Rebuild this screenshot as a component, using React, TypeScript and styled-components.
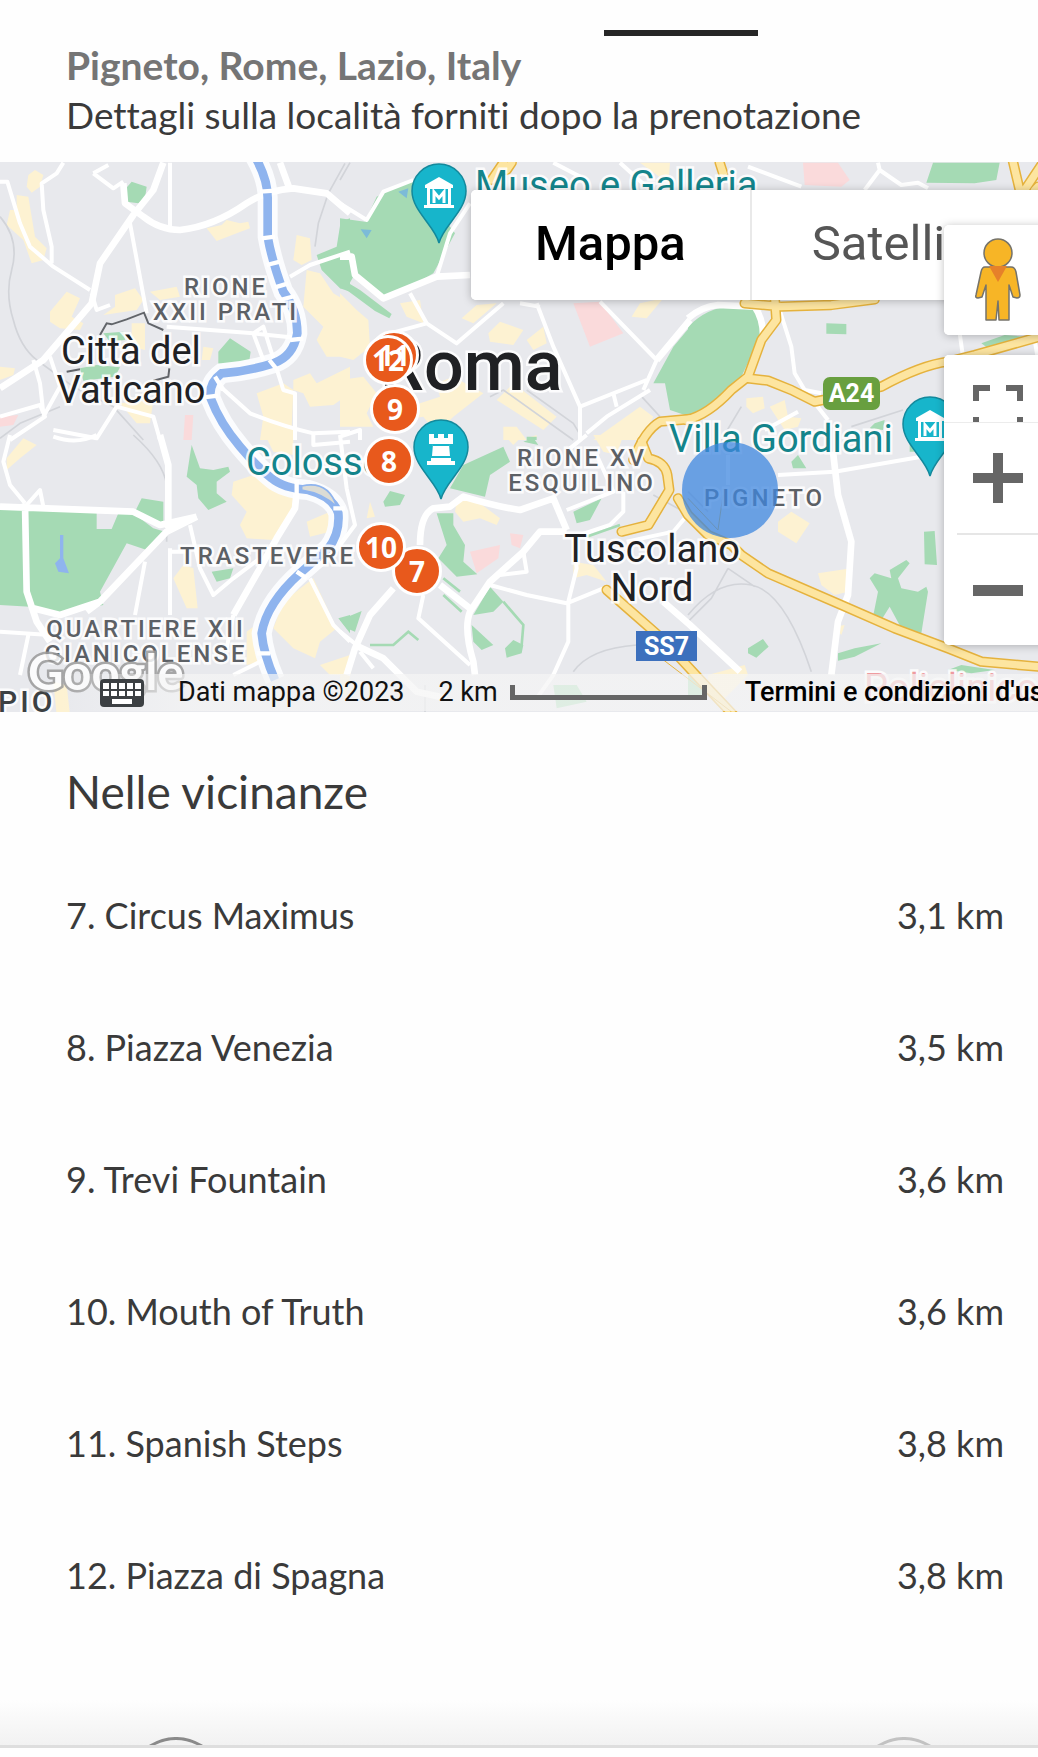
import React from "react";
import styled, { createGlobalStyle, css } from "styled-components";

const GlobalStyle = createGlobalStyle`
  * { box-sizing: border-box; }
  body { margin: 0; background: #fff; overflow-x: hidden; }
  button { font: inherit; border: 0; margin: 0; padding: 0; background: #fff; cursor: pointer; }
  h1, h2, p, ul { margin: 0; padding: 0; font-weight: inherit; }
`;

const Page = styled.main`
  font-family: Lato, "Open Sans", sans-serif;
  font-variant-ligatures: none;
  color: #3a3a3a;
  background: #fefefe;
  overflow: hidden;
`;

const TabStrip = styled.div`
  display: flex;
  justify-content: flex-end;
  padding: 30px 280px 0 0;
`;

const TabMarker = styled.div`
  width: 154px;
  height: 6px;
  background: #262626;
`;

const Heading = styled.header`
  padding: 4px 66px 22px;
  font-size: 37px;
  line-height: 50px;
`;

const Place = styled.h1`
  font-size: 39px;
  font-weight: 700;
  color: #757575;
`;

const MapFrame = styled.section`
  position: relative;
  height: 550px;
  overflow: hidden;
  background: #e8e9ed;
  font-family: Roboto, sans-serif;
`;

const MapDrawing = styled.svg`
  position: absolute;
  left: 0;
  top: 0;
  width: 1038px;
  height: 550px;
`;

type Kind = "area" | "town" | "city" | "sight" | "edge" | "clinic";

const kinds = {
  area: css`font-size: 24px; line-height: 25px; font-weight: 500; letter-spacing: 3px; color: #5c6065;`,
  town: css`font-size: 38px; line-height: 39px; color: #202124;`,
  city: css`font-size: 70px; line-height: 70px; font-weight: 500; color: #202124;`,
  sight: css`font-size: 38px; line-height: 39px; color: #13848b;`,
  edge: css`font-size: 30px; line-height: 30px; font-weight: 500; letter-spacing: 3px; color: #3c4043;`,
  clinic: css`font-size: 38px; line-height: 39px; color: #ee9ba0;`,
};

const Label = styled.span<{ $x: number; $y: number; $kind: Kind; $center?: boolean }>`
  position: absolute;
  left: ${(p) => p.$x}px;
  top: ${(p) => p.$y}px;
  white-space: pre;
  text-align: center;
  ${(p) => kinds[p.$kind]}
  ${(p) => p.$center && "transform: translateX(-50%);"}
  -webkit-text-stroke: 5px rgba(255, 255, 255, 0.85);
  paint-order: stroke fill;
`;

const Marker = styled.button<{ $x: number; $y: number }>`
  position: absolute;
  left: ${(p) => p.$x - 25}px;
  top: ${(p) => p.$y - 25}px;
  width: 50px;
  height: 50px;
  border: 3px solid #fff;
  border-radius: 50%;
  background: #e8591c;
  color: #fff;
  font-family: "Open Sans", sans-serif;
  font-size: 28px;
  line-height: 40px;
  font-weight: 700;
  text-align: center;
`;

/* Numbers stay readable above every disc, also where discs pile up. */
const MarkerNumber = styled.span`
  position: relative;
  z-index: 1;
`;

const Shield = styled.span<{ $x: number; $y: number }>`
  position: absolute;
  left: ${(p) => p.$x}px;
  top: ${(p) => p.$y}px;
  width: 61px;
  height: 30px;
  background: #3c70bd;
  color: #fff;
  font-size: 25px;
  line-height: 31px;
  font-weight: 700;
  text-align: center;
`;

const GreenShield = styled(Shield)`
  width: 57px;
  height: 33px;
  line-height: 33px;
  border-radius: 7px;
  background: #689f3f;
`;

const Logo = styled.span`
  position: absolute;
  left: 28px;
  top: 479px;
  font-family: Lato, sans-serif;
  font-size: 49px;
  line-height: 60px;
  font-weight: 700;
  color: #fff;
  opacity: 0.85;
  -webkit-text-stroke: 5px #9a9a9a;
  paint-order: stroke fill;
`;

const TypeSwitch = styled.div`
  position: absolute;
  z-index: 2;
  left: 471px;
  top: 28px;
  display: flex;
  border-radius: 5px;
  background: #fff;
  box-shadow: 0 1px 9px rgba(0, 0, 0, 0.25);
`;

const TypeButton = styled.button<{ $active?: boolean }>`
  height: 110px;
  padding: 0 64px 4px;
  border-radius: 5px;
  font-size: 49px;
  font-weight: ${(p) => (p.$active ? 500 : 400)};
  color: ${(p) => (p.$active ? "#000" : "#565656")};
  & + & {
    border-left: 2px solid #e9e9e9;
    border-radius: 0 5px 5px 0;
    padding-left: 60px;
  }
`;

const Controls = styled.div`
  position: absolute;
  z-index: 2;
  top: 63px;
  right: -14px;
  width: 108px;
  display: flex;
  flex-direction: column;
  gap: 20px;
`;

const ControlPanel = styled.div`
  display: flex;
  flex-direction: column;
  border-radius: 5px;
  background: #fff;
  box-shadow: 0 1px 9px rgba(0, 0, 0, 0.25);
  overflow: hidden;
`;

const ControlButton = styled.button`
  height: 110px;
  display: flex;
  align-items: center;
  justify-content: center;
`;

const FullscreenButton = styled(ControlButton)`
  height: 68px;
  align-items: flex-end;
  border-bottom: 1px solid #ececec;
`;

const Divider = styled.div`
  height: 2px;
  margin: 0 13px;
  background: #e6e6e6;
`;

const Legal = styled.div`
  position: absolute;
  left: 0;
  right: 0;
  bottom: 1px;
  height: 37px;
  display: flex;
  align-items: center;
  gap: 34px;
  padding-left: 100px;
  overflow: hidden;
  white-space: nowrap;
  font-size: 27px;
  line-height: 37px;
  color: #111;
  background: linear-gradient(to right, rgba(245, 245, 245, 0) 60px, rgba(245, 245, 245, 0.72) 190px);
`;

const KeyboardButton = styled.button`
  display: flex;
  flex: none;
  width: 44px;
  background: transparent;
`;

const Scale = styled.span`
  display: flex;
  align-items: center;
  gap: 12px;
`;

const ScaleBar = styled.span`
  width: 197px;
  height: 15px;
  border: 5px solid #666;
  border-top: 0;
`;

const Terms = styled.a`
  padding-left: 4px;
  color: #000;
  font-weight: 500;
  text-decoration: none;
`;

const Nearby = styled.section`
  padding: 50px 34px 59px 66px;
`;

const NearbyTitle = styled.h2`
  font-size: 46px;
  line-height: 60px;
`;

const NearbyList = styled.ul`
  padding-top: 27px;
  list-style: none;
`;

const NearbyRow = styled.li`
  display: flex;
  align-items: center;
  justify-content: space-between;
  height: 132px;
  font-size: 36px;
`;

const Dock = styled.footer`
  display: flex;
  justify-content: space-between;
  align-items: flex-end;
  height: 48px;
  margin-bottom: 9px;
  padding: 0 107px 0 149px;
  border-bottom: 3px solid #dedede;
  background: linear-gradient(#fefefe, #f2f2f2);
`;

interface Tile {
  at: [number, number];
  built?: string;
  parks?: string;
  pink?: string;
  rails?: string;
  roads?: string;
  main?: string;
  highway?: string;
}

/* Each tile is drawn at three units to the pixel. */
const tiles: Tile[] = [
  {
    at: [0, -2],
    built:
      "M85 45L105 30L130 45L120 80L95 98L80 80ZM50 105L85 110L105 230L140 265L130 300L95 310L70 240L20 195L30 150L50 150ZM620 205L665 195L680 180L720 190L745 185L750 205L710 220L650 243ZM890 225L930 235L935 300L905 315L880 300ZM150 455L200 395L240 415L215 470L250 490L240 510L180 505L150 485ZM345 405L405 385L430 420L410 450L310 465L345 440ZM450 395L530 380L540 410L480 420ZM920 330L960 340L1000 400L1050 430V590L980 590L950 540L970 500L940 470L910 440ZM0 620L45 625L40 645L0 660ZM395 490H435L435 570L395 560ZM610 560L640 565L630 600H605ZM880 660L930 640L950 670L1050 620V700L1000 735L930 740L910 700L880 690ZM770 700L850 670L880 690L875 800L890 840H780L790 770ZM360 730L460 720L450 790L410 790ZM1030 740L1050 720V790Z",
    parks:
      "M378 85L395 65L440 80L435 115L415 130L380 125ZM1050 175L1022 185L1010 260L950 285L965 330L1020 385L1050 395ZM690 535L752 575L745 622L655 635V575ZM240 625L290 615L360 622L345 650L250 662ZM310 520L370 515L375 540L330 545Z",
    pink: "M555 765L580 765L575 840H550ZM0 770L55 765L40 795L0 800Z",
    rails: "M0 170Q60 240 35 330Q15 400 40 480Q60 560 110 600L220 680L340 740L430 840M1035 10L985 100L955 190L945 260M0 835L60 790L180 740",
    roads:
      "M0 65H22L60 190L90 260L160 320L270 390M190 8L170 40L125 70L130 150L155 260V310M510 8V210M390 190L440 460M280 40L325 15M280 40L340 85L370 65M870 350L930 315L1050 275M500 500L760 520L900 535M760 520L790 500L850 690L885 700V840M760 520L790 600M650 670L750 760Q850 800 940 820L1050 815M0 770L120 735L135 770L30 840M100 600L120 670L130 760M160 810L290 835L350 740L460 770L480 840M275 400L290 450L330 435M150 590L180 680L130 770",
    main: "M490 8L460 90L400 165L300 310L275 430L130 600L0 685M370 70L375 130L430 170Q480 210 540 210Q640 200 740 130Q800 90 880 85L980 100L1050 160M840 8L870 90",
  },
  {
    at: [340, -2],
    built:
      "M0 400L50 450L85 480L90 560L40 600L0 590ZM180 430L240 420L250 490L200 470ZM365 475L410 435L470 430L400 490ZM445 520L480 485L550 510L520 555L450 545ZM0 660L70 650L110 700L80 760L100 800L0 800ZM180 780L240 730L300 710L290 670L340 650L430 700L340 770L290 820L250 770ZM470 720L520 670L650 770L610 810ZM875 470L900 430L970 415L920 475ZM900 740L940 770L900 840H760ZM490 800L530 800L560 840H490ZM560 540L610 500L620 550L580 570ZM900 8L990 8L985 70Z",
    parks:
      "M0 175L75 185L110 110L190 70L230 60L330 200L345 220L280 340L210 380L130 410L60 360L35 285L0 280ZM0 290L30 290L40 350L20 385L0 385ZM30 372L60 390L155 462L148 475L105 453L20 390ZM1050 500L1000 560L940 670L975 670L990 750L1050 770ZM560 830H590V840H560Z",
    pink: "M700 430L780 425L850 520L750 560Z",
    rails: "M450 710L490 690L700 840M560 690L700 790L730 840M905 710L960 770M0 60L30 8",
    roads:
      "M0 130L80 180L130 95L220 60M290 350L330 220L390 130M210 400L260 490L350 550L490 430M150 520L260 490M590 430L640 560L720 740V840M540 430L600 440M780 425L950 600L910 690M720 740L920 660M820 700L830 740M740 820L800 770L930 690M0 830L60 810V840M640 8L740 60M840 8L930 90",
    main: "M0 290L35 290L45 345L130 415L290 350L390 345M950 600L1050 480",
    highway: "M880 900Q915 810 960 785L1050 777M455 60L490 8M500 30L515 8",
  },
  {
    at: [688, -2],
    built: "M175 715L225 710L230 745L195 760L175 740ZM245 740L290 720L300 770L340 775L330 800L290 810Z",
    parks:
      "M0 500Q60 440 130 440L200 445L222 520L160 650L60 750L0 770ZM735 8H935L925 60L860 70L715 68ZM415 490L475 492V523L415 521ZM880 550L950 525L1010 530L900 565ZM560 790L590 780L585 810L545 805Z",
    pink: "M345 8H450L485 60L460 80L350 75Z",
    rails: "M490 800L645 750M160 740L100 840",
    roads:
      "M275 450L310 560L320 640L350 690L420 780M230 810L330 755M350 690L400 700M570 8L575 30L530 90M575 30L640 75L690 68L720 85M180 20L340 80M815 520L825 590M1040 540L1050 600",
    main: "M0 475Q40 440 90 435L200 440Q228 480 225 540",
    highway:
      "M-5 780Q60 765 130 690L180 650L220 540L265 480L260 410M180 655L240 662L310 690L380 725L430 715L580 680Q700 615 780 605L860 585L1055 530M170 430L280 440L430 435L560 418M975 5L995 90M1060 15L1010 90M95 8L107 45M1050 80L1040 90",
  },
  {
    at: [0, 273],
    built:
      "M20 70L70 10L110 30L60 70L20 105ZM700 140L760 120L820 160L880 190L870 250L820 315L740 310L720 270L740 230L695 180ZM920 260L990 230V290L930 305ZM520 430L550 390L580 400L593 520H560ZM940 430L1010 580L960 620L945 670L880 640L820 580L850 500ZM960 690L1050 660V720H990ZM800 10H880V60L820 50ZM160 740L200 750L210 840H170ZM740 590L780 560L780 680L740 690Z",
    parks:
      "M0 220L290 230V282H335L355 235H400L460 280L495 290L440 345L380 325L300 470L310 510L180 535L90 515L0 510ZM405 230L425 190L490 200V265L460 270ZM575 30L600 100L640 105L685 95L690 110L650 140V175L680 200L625 225L595 190L590 150L560 125L570 60ZM1015 550L1050 540V595ZM635 410L700 400L690 430L650 440Z",
    rails: "M400 0Q490 80 500 150V320",
    roads:
      "M290 0Q230 30 160 5M30 0L10 80L30 150L75 205M80 210L120 165L130 215M435 380L405 540M510 340V540M570 270L600 400L640 480L700 430L780 370M550 265L590 245M700 540L680 640M930 430L1000 570L1050 620M0 590L150 600M85 600L60 720M700 720L800 670M940 0V30L1050 20M510 350L560 350",
    main: "M480 0L505 90V280M0 215L400 230L480 270L590 245M590 245L500 290L300 500L180 540L100 520M890 170L885 220L830 310L780 400L700 540M75 205L80 470L110 560L150 620M260 530L300 500",
  },
  {
    at: [340, 273],
    built:
      "M350 200L400 190L480 250L470 270L420 250L370 260L345 230ZM500 8L550 0L520 30ZM760 0H850L830 60L790 50ZM90 200L105 245L80 250ZM700 380L760 390L800 440L740 420L700 430ZM0 670H40L20 780H0ZM560 10H590V0Z",
    parks:
      "M330 160L370 90L490 35L510 80L450 120L435 185ZM130 200L150 168L195 180L180 210L135 215ZM290 235H340V270L375 330L370 380L412 418L350 425L295 370L320 330ZM700 230L785 190L750 255L710 265ZM400 540L450 455L490 500L460 530ZM395 570L460 630L425 645L400 620ZM495 640L520 615L550 630L545 655L500 668ZM0 555L65 528L45 590L20 580ZM550 20L580 8L595 30ZM640 750H710L740 800L650 820Z",
    pink: "M390 350L480 330L475 370L410 415ZM510 295L550 300L540 340L515 330Z",
    rails: "M700 710Q750 640 890 630M940 180L1050 240M255 750V840",
    roads:
      "M450 450L560 480L680 505L790 460M680 225L820 170L770 60M850 170V230L810 270L720 300M700 300L710 400L685 500V620L640 720L590 790M250 480L235 550L390 690M550 350L560 410L480 420M0 590L50 630M1050 230L1000 290L860 320M0 0L20 160L45 270L0 330M690 40L740 0M60 650L100 700",
    main: "M240 330Q240 240 280 220L330 215L370 185Q470 215 540 225L640 190L680 285M680 290L600 290L550 350L450 440L390 530Q370 580 400 680L405 720M300 450L390 520M160 460L90 540L45 640L20 720M45 630L130 670L230 770L320 790M970 500L1050 570L1200 710",
    highway: "M905 20L925 70Q975 80 982 120L988 165L925 270L845 290M800 465L965 610L1100 755L1180 840",
  },
  {
    at: [688, 273],
    built: "M270 260L310 230L365 265L325 325L270 290ZM390 415L490 400L480 470L440 480L400 450ZM60 720L170 690L180 720L100 800L60 780ZM440 575L470 570L460 600Z",
    parks:
      "M708 290L740 288L747 390L710 388ZM545 430L560 415L610 430L605 405L655 375L665 385L630 430L640 460L690 470L715 455L720 470L700 595L640 580L605 515L580 555L555 545L570 470ZM180 640L225 612L242 635L205 668L180 655ZM450 655L500 640L580 625L500 665L450 677ZM310 80L330 60L355 100L315 100ZM780 705L820 690L920 705L850 715ZM0 720L40 740L60 780H0ZM665 15H680V50H665Z",
    rails: "M0 540Q90 430 190 450Q290 470 370 710M120 400L70 490L0 560M120 400L200 455M60 230L0 170",
    roads: "M270 120L440 110L700 65M120 60V150",
    main: "M435 50L450 180L490 320L480 480L450 560L430 720",
    highway: "M-30 190L0 240L60 300L130 330L160 360L240 415L460 510L620 580L780 640L880 680L1050 695",
  },
];

function Layer({ pick, ...paint }: { pick: keyof Tile } & React.SVGProps<SVGPathElement>) {
  return (
    <>
      {tiles.map((tile, i) =>
        tile[pick] ? (
          <path
            key={i}
            d={tile[pick] as string}
            transform={`translate(${tile.at[0]} ${tile.at[1]}) scale(0.33333)`}
            fill="none"
            strokeLinejoin="round"
            {...paint}
          />
        ) : null
      )}
    </>
  );
}

const river =
  "M765 -10Q805 60 803 120L803 230Q815 300 850 395Q892 450 892 520Q880 590 820 610Q740 635 665 640Q625 670 632 715Q660 790 720 860Q770 920 815 955Q850 985 925 990Q1000 1010 1015 1060Q1020 1120 985 1165L900 1240Q800 1330 785 1420Q790 1480 825 1560";

function Pin({ x, y, children }: { x: number; y: number; children: React.ReactNode }) {
  return (
    <g transform={`translate(${x} ${y})`}>
      <path d="M0 79C-4 62-27 47-27 27A27 27 0 1 1 27 27C27 47 4 62 0 79Z" fill="#17b5cb" stroke="#13899c" strokeWidth="1.5" />
      {children}
    </g>
  );
}

function Museum() {
  return (
    <g>
      <path d="M-14 21L0 13L14 21V24H-14ZM-12 23H12V41H-12ZM-15 41H15V44H-15Z" fill="#fff" />
      <path d="M-9 25H9V40H-9Z" fill="#17b5cb" />
      <path d="M-5 39V28L0 34L5 28V39" fill="none" stroke="#fff" strokeWidth="3" />
    </g>
  );
}

function MapArt() {
  return (
    <MapDrawing viewBox="0 0 1038 550" aria-hidden="true">
      <Layer pick="built" fill="#fdf2d2" />
      <Layer pick="pink" fill="#fadadb" />
      <Layer pick="parks" fill="#a5dab4" />
      <Layer pick="rails" stroke="#d2d4d9" strokeWidth="5" />
      <g transform="translate(0 -2) scale(0.33333)" fill="none">
        <path d={river} stroke="#fbfcfe" strokeWidth="60" />
      </g>
      <Layer pick="roads" stroke="#fff" strokeWidth="12" />
      <Layer pick="main" stroke="#fff" strokeWidth="20" />
      <g transform="translate(0 -2) scale(0.33333)" fill="none">
        <path d={river} stroke="#8fb4ee" strokeWidth="26" />
        <path d="M905 978Q985 960 1010 1040Q970 1000 905 990Z" fill="#dcdcd5" stroke="#8fb4ee" strokeWidth="5" />
        <path
          d="M780 95L825 92M785 235L825 230M800 315L840 305M825 382L865 370M840 420L885 408M870 540L910 536M808 600L828 625M645 650L670 690M610 712L655 707M890 960V1010M1000 1045H1035M890 1235L920 1255M770 1480H810"
          stroke="#fff"
          strokeWidth="13"
        />
        <path d="M300 525L320 490L335 493L380 478L432 458L445 490L490 510M200 635L240 628M508 625L505 650L460 662" stroke="#62656a" strokeWidth="6" />
        <path d="M180 1125H190V1195L207 1240L175 1235L165 1210L180 1195Z" fill="#8fb4ee" />
        <path d="M1195 95L1225 85L1220 115ZM1082 208L1115 210L1100 235Z" fill="#7cbbd8" />
      </g>
      <g transform="translate(340 273) scale(0.33333)" stroke="#a5dab4" strokeWidth="8" fill="none">
        <path d="M90 630H160L205 590L235 615M490 500L550 570L545 630M310 430L360 470M310 480L365 530M740 305L840 270" />
      </g>
      <Layer pick="highway" stroke="#e5b23d" strokeWidth="31" strokeLinecap="round" />
      <Layer pick="highway" stroke="#fde5a0" strokeWidth="22" strokeLinecap="round" />
      <g transform="translate(688 273) scale(0.33333)" stroke="#e5b23d" strokeWidth="3" fill="none">
        <path d="M-80 670L130 830M0 190L90 285L105 180" />
      </g>
    </MapDrawing>
  );
}

function MapPins() {
  return (
    <MapDrawing viewBox="0 0 1038 550" aria-hidden="true">
      <circle cx="730" cy="328" r="48" fill="#3f87df" fillOpacity="0.75" />
      <Pin x={439} y={2}><Museum /></Pin>
      <Pin x={930} y={235}><Museum /></Pin>
      <Pin x={441} y={258}>
        <path d="M-12 14H-7V18H-3V14H3V18H7V14H12V24H8L9 36H-9L-8 24H-12ZM-10 38H10V41H14V45H-14V41H-10Z" fill="#fff" />
        <path d="M-8 25H8M-10 37H10" stroke="#17b5cb" strokeWidth="2" />
      </Pin>
    </MapDrawing>
  );
}

const places = [
  [7, "Circus Maximus", "3,1 km"],
  [8, "Piazza Venezia", "3,5 km"],
  [9, "Trevi Fountain", "3,6 km"],
  [10, "Mouth of Truth", "3,6 km"],
  [11, "Spanish Steps", "3,8 km"],
  [12, "Piazza di Spagna", "3,8 km"],
] as const;

const markers = [
  [11, 394, 193],
  [12, 388, 198],
  [9, 395, 247],
  [8, 389, 299],
  [7, 417, 409],
  [10, 381, 385],
] as const;

export default function App() {
  return (
    <Page>
      <GlobalStyle />
      <TabStrip>
        <TabMarker />
      </TabStrip>
      <Heading>
        <Place>Pigneto, Rome, Lazio, Italy</Place>
        <p>Dettagli sulla località forniti dopo la prenotazione</p>
      </Heading>

      <MapFrame aria-label="Mappa">
        <MapArt />
        <Label $kind="area" $center $x={226} $y={113}>{"RIONE\nXXII PRATI"}</Label>
        <Label $kind="town" $center $x={131} $y={170}>{"Città del\nVaticano"}</Label>
        <Label $kind="city" $x={380} $y={169}>Roma</Label>
        <Label $kind="sight" $x={475} $y={4}>Museo e Galleria</Label>
        <Label $kind="sight" $x={669} $y={258}>Villa Gordiani</Label>
        <Label $kind="sight" $x={246} $y={281}>Colosseo</Label>
        <Label $kind="area" $center $x={582} $y={284}>{"RIONE XV\nESQUILINO"}</Label>
        <Label $kind="area" $x={704} $y={324}>PIGNETO</Label>
        <Label $kind="area" $x={180} $y={382}>TRASTEVERE</Label>
        <Label $kind="area" $center $x={146} $y={455}>{"QUARTIERE XII\nGIANICOLENSE"}</Label>
        <Label $kind="town" $center $x={652} $y={368}>{"Tuscolano\nNord"}</Label>
        <Label $kind="edge" $x={-2} $y={525}>PIO</Label>
        <Label $kind="clinic" $x={864} $y={507}>Policlinico</Label>
        <GreenShield $x={823} $y={215}>A24</GreenShield>
        <Shield $x={636} $y={469}>SS7</Shield>
        <MapPins />
        {markers.map(([n, x, y]) => (
          <Marker key={n} $x={x} $y={y}>
            <MarkerNumber>{n}</MarkerNumber>
          </Marker>
        ))}
        <Logo>Google</Logo>

        <Legal>
          <KeyboardButton aria-label="Scorciatoie da tastiera">
            <svg width="44" height="28" viewBox="0 0 44 28">
              <rect width="44" height="28" rx="4" fill="#3c4043" />
              <path d="M3 4h6v6H3zM11 4h6v6h-6zM19 4h6v6h-6zM27 4h6v6h-6zM35 4h6v6h-6zM3 12h6v5H3zM11 12h6v5h-6zM19 12h6v5h-6zM27 12h6v5h-6zM35 12h6v5h-6zM12 20h20v5H12z" fill="#fff" />
            </svg>
          </KeyboardButton>
          <span>Dati mappa ©2023</span>
          <Scale>
            2 km
            <ScaleBar />
          </Scale>
          <Terms href="#termini">Termini e condizioni d'uso</Terms>
        </Legal>

        <TypeSwitch>
          <TypeButton $active>Mappa</TypeButton>
          <TypeButton>Satellite</TypeButton>
        </TypeSwitch>

        <Controls>
          <ControlPanel>
            <ControlButton aria-label="Street View">
              <svg width="48" height="84" viewBox="0 0 48 84">
                <g fill="#f7b526" stroke="#75736b" strokeWidth="1.5" strokeLinejoin="round">
                  <path d="M11 29H37Q41 29 42 34L46 57Q46 60 43 60L39 59L35 47V82H25L24 63L22 82H12V47L8 59L4 60Q1 60 2 57L7 34Q8 29 11 29Z" />
                  <circle cx="24" cy="15" r="14" />
                </g>
                <path d="M15 28H33L24 44Z" fill="#e6812a" />
              </svg>
            </ControlButton>
          </ControlPanel>
          <ControlPanel>
            <FullscreenButton aria-label="Schermo intero">
              <svg width="50" height="38" viewBox="0 0 50 38">
                <path d="M3 17V4H17M33 4H47V17M3 33V38M47 33V38" fill="none" stroke="#666" strokeWidth="6" />
              </svg>
            </FullscreenButton>
            <ControlButton aria-label="Aumenta zoom">
              <svg width="50" height="50" viewBox="0 0 50 50">
                <path d="M20 0H30V20H50V30H30V50H20V30H0V20H20Z" fill="#666" />
              </svg>
            </ControlButton>
            <Divider />
            <ControlButton aria-label="Riduci zoom">
              <svg width="50" height="11" viewBox="0 0 50 11">
                <path d="M0 0H50V11H0Z" fill="#666" />
              </svg>
            </ControlButton>
          </ControlPanel>
        </Controls>
      </MapFrame>

      <Nearby>
        <NearbyTitle>Nelle vicinanze</NearbyTitle>
        <NearbyList>
          {places.map(([n, name, distance]) => (
            <NearbyRow key={n}>
              <span>{n}. {name}</span>
              <span>{distance}</span>
            </NearbyRow>
          ))}
        </NearbyList>
      </Nearby>

      <Dock>
        <svg width="54" height="8" viewBox="0 0 54 8">
          <path d="M1 9Q27-6 53 9" fill="none" stroke="#8a8a8a" strokeWidth="3" />
        </svg>
        <svg width="54" height="8" viewBox="0 0 54 8">
          <path d="M1 9Q27-6 53 9" fill="none" stroke="#c2c2c2" strokeWidth="3" />
        </svg>
      </Dock>
    </Page>
  );
}
